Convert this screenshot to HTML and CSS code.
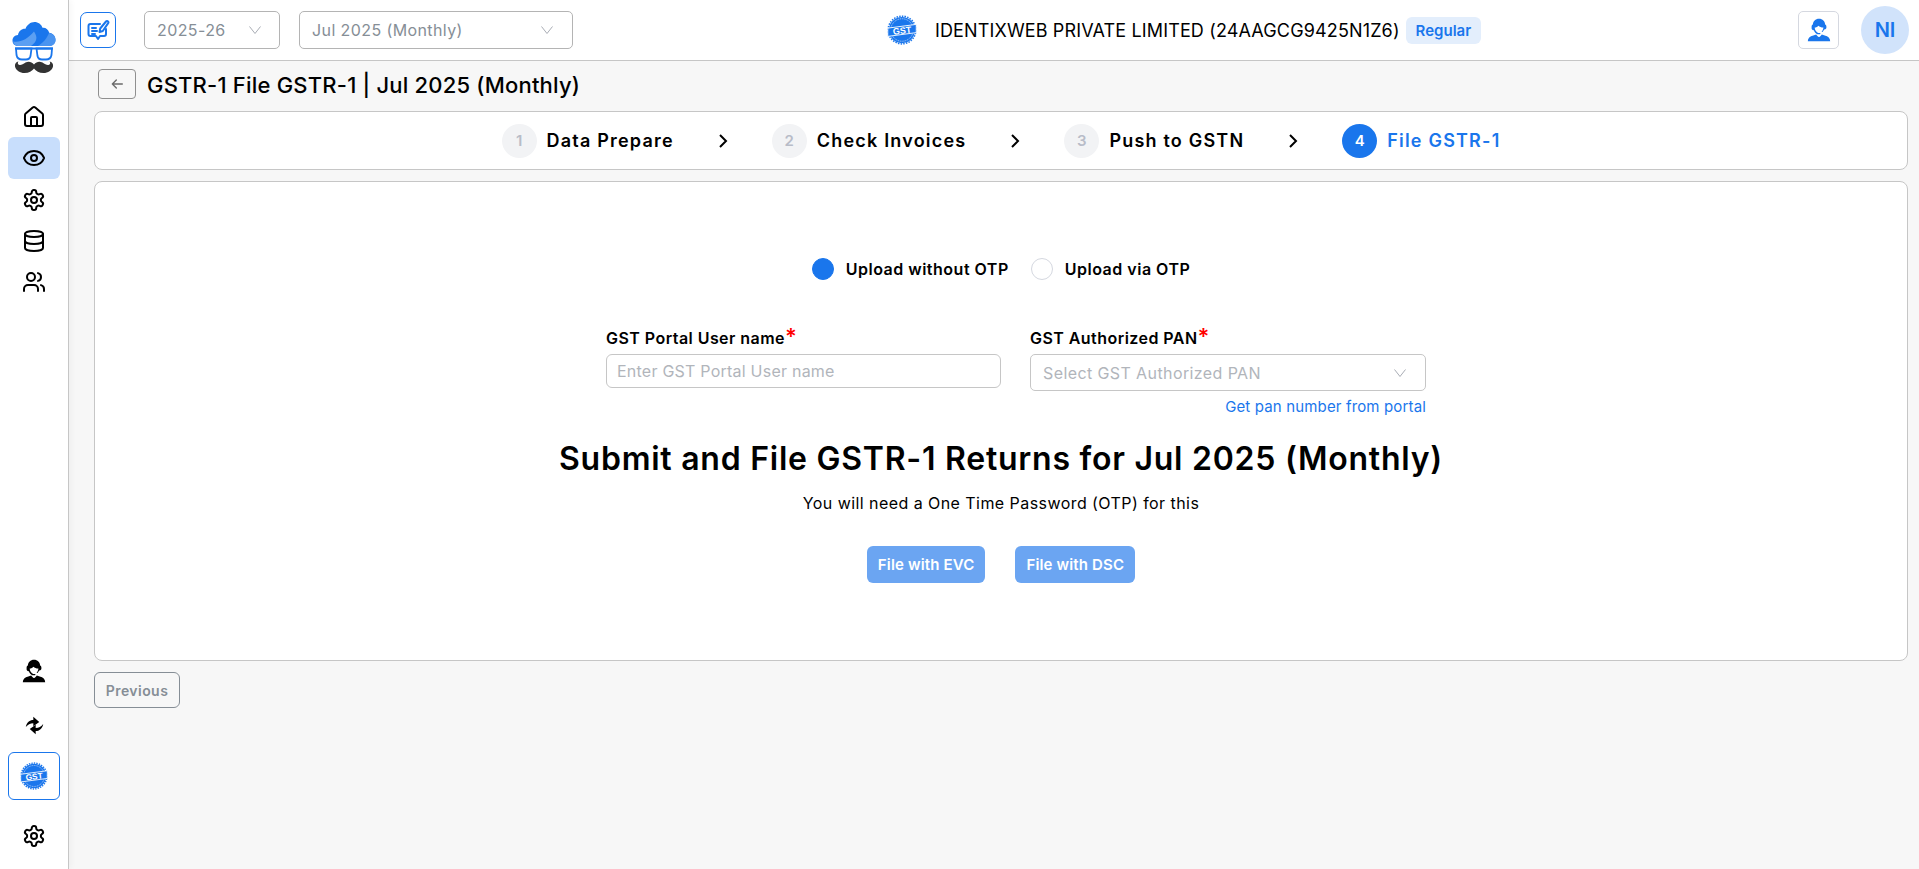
FILE: index.html
```html
<!DOCTYPE html>
<html lang="en">
<head>
    <meta charset="UTF-8">
    <meta name="viewport" content="width=device-width, initial-scale=1.0">
    <title>GSTR-1 File</title>
    <link rel="stylesheet" href="styles.css">
</head>
<body>
    <svg class="defs" width="0" height="0">
        <defs>
            <symbol id="gear" viewBox="0 0 24 24">
                <path d="M12.22 2h-.44a2 2 0 0 0-2 2v.18a2 2 0 0 1-1 1.73l-.43.25a2 2 0 0 1-2 0l-.15-.08a2 2 0 0 0-2.73.73l-.22.38a2 2 0 0 0 .73 2.73l.15.1a2 2 0 0 1 1 1.72v.51a2 2 0 0 1-1 1.74l-.15.09a2 2 0 0 0-.73 2.73l.22.38a2 2 0 0 0 2.73.73l.15-.08a2 2 0 0 1 2 0l.43.25a2 2 0 0 1 1 1.73V20a2 2 0 0 0 2 2h.44a2 2 0 0 0 2-2v-.18a2 2 0 0 1 1-1.73l.43-.25a2 2 0 0 1 2 0l.15.08a2 2 0 0 0 2.73-.73l.22-.39a2 2 0 0 0-.73-2.73l-.15-.08a2 2 0 0 1-1-1.74v-.5a2 2 0 0 1 1-1.74l.15-.09a2 2 0 0 0 .73-2.73l-.22-.38a2 2 0 0 0-2.73-.73l-.15.08a2 2 0 0 1-2 0l-.43-.25a2 2 0 0 1-1-1.73V4a2 2 0 0 0-2-2z"/>
                <circle cx="12" cy="12" r="3"/>
            </symbol>
            <symbol id="agent" viewBox="0 0 24 24">
                <path fill-rule="evenodd" d="M12 .8C8.4.8 6.1 3.3 5.9 6.5 5 6.9 4.6 7.7 4.6 8.7v1.600c0 1 .7 1.900 1.800 1.900h.5c.6 1.700 1.600 3 2.900 3.700.5.300 1 .4 1.600.4h1.400c.4 0 .7-.3.7-.7s-.3-.7-.7-.7h-1.700c-1.900-.6-3.400-3-3.400-5.300 1.500-.1 2.800-.6 3.700-1.800 1.100 1.100 3 1.800 5 1.800-.1 1.600-.8 3.200-1.800 4.300h.9c.7-.7 1.200-1.600 1.600-2.500h.5c1.100 0 1.800-.9 1.800-1.900V8.700c0-1-.4-1.800-1.300-2.200C18 3.300 15.600.8 12 .8z"/>
                <path d="M.8 23.200c0-3.300 2-4.900 5.500-5.800l2.900-1c.7 1.200 1.700 2.200 2.800 2.600 1.100-.4 2.100-1.400 2.800-2.600l2.900 1c3.500.9 5.500 2.500 5.500 5.800z"/>
            </symbol>
            <symbol id="gst" viewBox="0 0 40 40">
                <circle cx="20" cy="20" r="17.500" fill="#1a76ec"/>
                <circle cx="20" cy="20" r="18.500" fill="none" stroke="#1a76ec" stroke-width="2" stroke-dasharray="2 1.600"/>
                <circle cx="20" cy="20" r="15" fill="none" stroke="#cfe1fb" stroke-width="1" stroke-dasharray="1.500 1"/>
                <path d="M1 17.500 39 12.500V23.500L1 28.500z" fill="#1a76ec" stroke="#fff" stroke-width="1.200"/>
                <text x="20" y="25" class="gst-text" transform="rotate(-7 20 20)">GST</text>
            </symbol>
            <symbol id="chevron-down" viewBox="0 0 14 14">
                <path d="M1.500 3.500 7 10.500 12.500 3.500"/>
            </symbol>
            <symbol id="chevron-right" viewBox="0 0 16 16">
                <path d="M5 2 11 8 5 14"/>
            </symbol>
        </defs>
    </svg>

    <div class="app">
        <aside class="sidebar">
            <svg class="logo" viewBox="0 0 44 54">
                <path d="M6 25C2.500 25 .5 22.500 .5 19.500c0-3 2.200-5.400 5.500-5.500C6.700 10 9.800 7.500 13.500 7.800 15 3.800 18.500 1 22.500 1c3.700 0 6.800 2.200 8 5.800 3-.5 6 1.600 6.700 5 3.600.3 6.300 3.400 6.300 7C43.500 22.500 40.500 25 37 25z" fill="#1a76ec"/>
                <path d="M1 20.500c8 1 14-2 21-10 4 6 3 10-3 14.500H6C3.500 25 1.700 23 1 20.500z" fill="#5b9ff2"/>
                <path d="M26 25C32 21 35 17 37 12c4 .5 6.500 3 6.500 7s-3 6-6.500 6z" fill="#4a94f0"/>
                <g fill="none" stroke="#1a76ec" stroke-width="1.800">
                    <path d="M3 27.500H41"/>
                    <path d="M4 27.500H19.500L18.500 35c-.4 2-2 3.500-4.500 3.500H10C7 38.500 5 36.500 4.500 34z"/>
                    <path d="M40 27.500H24.500L25.500 35c.4 2 2 3.500 4.500 3.500H34C37 38.500 39 36.500 39.500 34z"/>
                </g>
                <path d="M22 43.500c2.500-3 5.500-3.500 8.500-2 2.500 1.500 4.500 3 6.500 2.300 1.500-.6 1.500-2.300.5-3.300 2.500.3 4 2.500 3.500 5-1 4-5 6.500-9.500 6.500-4.500 0-7.500-2-9.500-4.500-2 2.500-5 4.500-9.500 4.500-4.500 0-8.500-2.500-9.500-6.500-.5-2.500 1-4.700 3.500-5-1 1-1 2.700.5 3.300 2 .7 4-.8 6.500-2.300 3-1.500 6-1 8.500 2z" fill="#333"/>
            </svg>
            <nav class="side-nav">
                <a class="side-item" href="#">
                    <svg class="icon" viewBox="0 0 24 24"><path d="M15 21v-8a1 1 0 0 0-1-1h-4a1 1 0 0 0-1 1v8"/><path d="M3 10a2 2 0 0 1 .709-1.528l7-5.999a2 2 0 0 1 2.582 0l7 5.999A2 2 0 0 1 21 10v9a2 2 0 0 1-2 2H5a2 2 0 0 1-2-2z"/></svg>
                </a>
                <a class="side-item active" href="#">
                    <svg class="icon" viewBox="0 0 24 24"><path d="M2.062 12.348a1 1 0 0 1 0-.696 10.750 10.750 0 0 1 19.876 0 1 1 0 0 1 0 .696 10.750 10.750 0 0 1-19.876 0"/><circle cx="12" cy="12" r="3"/></svg>
                </a>
                <a class="side-item" href="#">
                    <svg class="icon"><use href="#gear"/></svg>
                </a>
                <a class="side-item" href="#">
                    <svg class="icon" viewBox="0 0 24 24"><ellipse cx="12" cy="5" rx="9" ry="3"/><path d="M3 5V19A9 3 0 0 0 21 19V5"/><path d="M3 12A9 3 0 0 0 21 12"/></svg>
                </a>
                <a class="side-item" href="#">
                    <svg class="icon" viewBox="0 0 24 24"><path d="M16 21v-2a4 4 0 0 0-4-4H6a4 4 0 0 0-4 4v2"/><circle cx="9" cy="7" r="4"/><path d="M22 21v-2a4 4 0 0 0-3-3.870"/><path d="M16 3.130a4 4 0 0 1 0 7.750"/></svg>
                </a>
            </nav>
            <div class="side-bottom">
                <a class="side-link" href="#"><svg class="agent-icon"><use href="#agent"/></svg></a>
                <a class="side-link" href="#">
                    <svg class="swap-icon" viewBox="0 0 24 24">
                        <path d="M1 14C2 8 6 5 10.500 5V1L18 7.500 10.500 13V9C6.500 9 3.500 10.500 1 14z"/>
                        <path d="M23 10C22 16 18 19 13.500 19V23L6 16.500 13.500 11V15C17.500 15 20.500 13.500 23 10z"/>
                    </svg>
                </a>
                <a class="side-gst" href="#"><svg class="gst-small"><use href="#gst"/></svg></a>
                <a class="side-link side-last" href="#"><svg class="icon"><use href="#gear"/></svg></a>
            </div>
        </aside>

        <div class="content">
            <header class="topbar">
                <div class="topbar-left">
                    <button class="note-btn">
                        <svg viewBox="0 0 24 24">
                            <path d="M14 6H4.500A2 2 0 0 0 2.500 8v8a2 2 0 0 0 2 2h5.500l2 3 2-3h4a2 2 0 0 0 2-2v-5"/>
                            <path d="M6 10h4M6 13h5M6 16h3"/>
                            <path d="M13.500 14l.7-3.500L20 3.500c.6-.7 1.500-.7 2 0 .5.500.5 1.300 0 1.900L16.800 13z"/>
                        </svg>
                    </button>
                    <div class="select select-year">
                        <span>2025-26</span>
                        <svg class="caret"><use href="#chevron-down"/></svg>
                    </div>
                    <div class="select select-month">
                        <span>Jul 2025 (Monthly)</span>
                        <svg class="caret"><use href="#chevron-down"/></svg>
                    </div>
                </div>
                <div class="company">
                    <svg class="gst-top"><use href="#gst"/></svg>
                    <span class="company-name">IDENTIXWEB PRIVATE LIMITED (24AAGCG9425N1Z6)</span>
                    <span class="badge">Regular</span>
                </div>
                <div class="topbar-right">
                    <button class="support-btn"><svg class="agent-blue"><use href="#agent"/></svg></button>
                    <div class="avatar">NI</div>
                </div>
            </header>

            <main class="page">
                <div class="title-row">
                    <button class="back-btn">
                        <svg viewBox="0 0 24 24"><path d="M20 12H5M11 6l-6 6 6 6"/></svg>
                    </button>
                    <h1>GSTR-1 File GSTR-1 | Jul 2025 (Monthly)</h1>
                </div>

                <div class="stepper">
                    <div class="step"><span class="step-num">1</span><span class="step-label">Data Prepare</span></div>
                    <svg class="step-arrow"><use href="#chevron-right"/></svg>
                    <div class="step"><span class="step-num">2</span><span class="step-label">Check Invoices</span></div>
                    <svg class="step-arrow"><use href="#chevron-right"/></svg>
                    <div class="step"><span class="step-num">3</span><span class="step-label">Push to GSTN</span></div>
                    <svg class="step-arrow"><use href="#chevron-right"/></svg>
                    <div class="step current"><span class="step-num">4</span><span class="step-label">File GSTR-1</span></div>
                </div>

                <section class="card">
                    <div class="radios">
                        <label class="radio-item"><span class="radio checked"></span>Upload without OTP</label>
                        <label class="radio-item"><span class="radio"></span>Upload via OTP</label>
                    </div>

                    <div class="fields">
                        <div class="field field-user">
                            <label for="username">GST Portal User name<span class="req">*</span></label>
                            <input type="text" id="username" placeholder="Enter GST Portal User name">
                        </div>
                        <div class="field">
                            <label>GST Authorized PAN<span class="req">*</span></label>
                            <div class="select select-pan">
                                <span>Select GST Authorized PAN</span>
                                <svg class="caret"><use href="#chevron-down"/></svg>
                            </div>
                            <a class="pan-link" href="#">Get pan number from portal</a>
                        </div>
                    </div>

                    <h2>Submit and File GSTR-1 Returns for Jul 2025 (Monthly)</h2>
                    <p class="sub">You will need a One Time Password (OTP) for this</p>

                    <div class="file-actions">
                        <button class="file-btn">File with EVC</button>
                        <button class="file-btn">File with DSC</button>
                    </div>
                </section>

                <button class="prev-btn">Previous</button>
            </main>
        </div>
    </div>
</body>
</html>
```

FILE: styles.css
```css
* {
    box-sizing: border-box;
}
html {
    overflow: hidden;
}
body {
    font-family: Inter, "Noto Sans", sans-serif;
    margin: 0;
    padding: 0;
    background-color: #f7f7f7;
    color: #000;
}
button {
    font-family: inherit;
    cursor: pointer;
}
.defs {
    position: absolute;
}
.gst-text {
    font-family: "Liberation Sans", sans-serif;
    font-size: 12px;
    font-weight: 700;
    fill: #fff;
    text-anchor: middle;
}
.app {
    display: flex;
    height: 869px;
}

/* sidebar */
.sidebar {
    width: 69px;
    flex-shrink: 0;
    background: #fff;
    border-right: 1px solid #c6c6c6;
    box-shadow: 2px 0 6px rgba(0,0,0,0.04);
    display: flex;
    flex-direction: column;
    align-items: center;
    z-index: 1;
}
.logo {
    width: 44px;
    height: 54px;
    margin-top: 21px;
    margin-bottom: 21px;
}
.icon {
    width: 24px;
    height: 24px;
    fill: none;
    stroke: #000;
    stroke-width: 2;
    stroke-linecap: round;
    stroke-linejoin: round;
}
.side-nav {
    width: 100%;
    padding: 0 8px;
}
.side-item {
    height: 41px;
    display: flex;
    align-items: center;
    justify-content: center;
    border-radius: 6px;
}
.side-item.active {
    background: #c8defc;
    height: 42px;
}
.side-bottom {
    margin-top: auto;
    width: 100%;
    padding: 0 8px 6px;
    display: flex;
    flex-direction: column;
    align-items: center;
}
.side-link {
    height: 54px;
    display: flex;
    align-items: center;
    justify-content: center;
}
.side-last {
    margin-top: 9px;
}
.agent-icon {
    width: 24px;
    height: 24px;
    fill: #000;
}
.swap-icon {
    width: 19px;
    height: 19px;
    fill: #000;
}
.side-gst {
    width: 52px;
    height: 48px;
    border: 1px solid #1a76ec;
    border-radius: 6px;
    display: flex;
    align-items: center;
    justify-content: center;
}
.gst-small {
    width: 28px;
    height: 28px;
}

/* top bar */
.content {
    flex: 1;
    min-width: 0;
}
.topbar {
    height: 61px;
    background: #fff;
    border-bottom: 1px solid #c6c6c6;
    display: flex;
    align-items: center;
    padding: 0 10px 0 11px;
}
.topbar-left {
    display: flex;
    align-items: center;
}
.note-btn {
    width: 36px;
    height: 36px;
    padding: 5px;
    background: #fff;
    border: 1px solid #1a76ec;
    border-radius: 7px;
    margin-right: 28px;
    display: flex;
}
.note-btn svg {
    width: 24px;
    height: 24px;
    fill: none;
    stroke: #1a76ec;
    stroke-width: 2;
    stroke-linecap: round;
    stroke-linejoin: round;
}
.select {
    display: flex;
    align-items: center;
    justify-content: space-between;
    background: #fff;
    border: 1px solid #b4b4b4;
    border-radius: 5px;
    color: #868e96;
    font-size: 16px;
    letter-spacing: 0.4px;
    height: 38px;
}
.select-year {
    width: 136px;
    padding: 0 17px 0 12px;
    margin-right: 19px;
}
.select-month {
    width: 274px;
    padding: 0 18px 0 12px;
}
.caret {
    width: 14px;
    height: 14px;
    fill: none;
    stroke: #a9adb5;
    stroke-width: 1;
}
.company {
    display: flex;
    align-items: center;
    margin-left: 314px;
}
.gst-top {
    width: 30px;
    height: 30px;
    margin-right: 18px;
}
.company-name {
    font-size: 18px;
    letter-spacing: 0.14px;
    white-space: nowrap;
}
.badge {
    margin-left: 6px;
    background: #e3eefc;
    color: #1a76ec;
    font-size: 15px;
    font-weight: 600;
    padding: 0 10px;
    height: 27px;
    line-height: 27px;
    border-radius: 6px;
    margin-top: 1px;
}
.topbar-right {
    margin-left: auto;
    display: flex;
    align-items: center;
    gap: 22px;
}
.support-btn {
    width: 41px;
    height: 38px;
    padding: 0;
    background: #fff;
    border: 1px solid #d5d8e0;
    border-radius: 5px;
    display: flex;
    align-items: center;
    justify-content: center;
}
.agent-blue {
    width: 24px;
    height: 24px;
    fill: #1a76ec;
}
.avatar {
    width: 48px;
    height: 48px;
    border-radius: 50%;
    background: #d1e3fb;
    color: #1a76ec;
    font-size: 20px;
    font-weight: 600;
    display: flex;
    align-items: center;
    justify-content: center;
}

/* page */
.page {
    padding: 8px 11px 0 25px;
}
.title-row {
    display: flex;
    align-items: center;
    gap: 11px;
    height: 30px;
    margin-bottom: 12px;
    padding-left: 4px;
}
.title-row h1 {
    font-size: 22px;
    font-weight: 500;
    letter-spacing: 0.2px;
    margin: 2px 0 0;
    white-space: nowrap;
}
.back-btn {
    width: 38px;
    height: 30px;
    padding: 0;
    background: #f7f7f7;
    border: 1px solid #8f8f8f;
    border-radius: 4px;
    display: flex;
    align-items: center;
    justify-content: center;
}
.back-btn svg {
    width: 16px;
    height: 16px;
    fill: none;
    stroke: #6b6b6b;
    stroke-width: 2;
    stroke-linecap: round;
    stroke-linejoin: round;
}
.stepper {
    height: 59px;
    background: #fff;
    border: 1px solid #c6c6c6;
    border-radius: 8px;
    display: flex;
    align-items: center;
    justify-content: center;
    gap: 41px;
    margin-bottom: 11px;
}
.step {
    display: flex;
    align-items: center;
    gap: 10px;
}
.step-num {
    width: 35px;
    height: 34px;
    border-radius: 50%;
    background: #f2f3f5;
    color: #b8bcc8;
    font-size: 15px;
    font-weight: 600;
    display: flex;
    align-items: center;
    justify-content: center;
}
.step-label {
    font-size: 18px;
    font-weight: 600;
    letter-spacing: 1.2px;
}
.step-arrow {
    width: 16px;
    height: 16px;
    fill: none;
    stroke: #000;
    stroke-width: 2;
}
.step.current .step-num {
    background: #1a76ec;
    color: #fff;
}
.step.current .step-label {
    color: #1a76ec;
}
.card {
    height: 480px;
    background: #fff;
    border: 1px solid #c6c6c6;
    border-radius: 8px;
    padding-top: 75px;
    display: flex;
    flex-direction: column;
    align-items: center;
}
.radios {
    display: flex;
    gap: 22px;
}
.radio-item {
    display: flex;
    align-items: center;
    gap: 12px;
    font-size: 16px;
    font-weight: 600;
    letter-spacing: 0.5px;
    height: 24px;
}
.radio {
    width: 22px;
    height: 22px;
    border-radius: 50%;
    border: 1px solid #d5d8e0;
    background: #fff;
}
.radio.checked {
    background: #1a76ec;
    border-color: #1a76ec;
}
.fields {
    display: flex;
    gap: 29px;
    margin: 46px 0 0 30px;
    height: 89px;
}
.field {
    width: 396px;
    display: flex;
    flex-direction: column;
}
.field-user {
    width: 395px;
}
.field label {
    font-size: 16px;
    font-weight: 600;
    letter-spacing: 0.45px;
    line-height: 22px;
    margin-bottom: 5px;
}
.req {
    color: #f00;
    font-size: 22px;
    line-height: 16px;
}
.field input {
    height: 34px;
    padding: 0 10px;
    border: 1px solid #c6c6c6;
    border-radius: 6px;
    font-family: inherit;
    font-size: 16px;
    letter-spacing: 0.23px;
    outline: none;
}
.field input::placeholder {
    color: #b1b5bb;
}
.select-pan {
    border-color: #c6c6c6;
    color: #b1b5bb;
    padding: 0 18px 0 12px;
}
.pan-link {
    align-self: flex-end;
    margin-top: 6px;
    font-size: 15px;
    letter-spacing: 0.15px;
    color: #1a76ec;
    text-decoration: none;
}
.card h2 {
    font-size: 32px;
    font-weight: 600;
    letter-spacing: 0.75px;
    margin: 23px 0 0;
    line-height: 40px;
}
.sub {
    font-size: 16px;
    letter-spacing: 0.44px;
    margin: 14px 0 0;
    line-height: 20px;
}
.file-actions {
    display: flex;
    gap: 30px;
    margin-top: 33px;
    margin-left: 0;
}
.file-btn {
    height: 37px;
    padding: 0 11px;
    background: #6ba5f2;
    border: none;
    border-radius: 6px;
    color: #fff;
    font-size: 15px;
    letter-spacing: 0.15px;
    font-weight: 600;
}
.prev-btn {
    display: block;
    margin-top: 11px;
    width: 86px;
    height: 36px;
    padding: 0;
    background: #f7f7f7;
    border: 1px solid #868e96;
    border-radius: 6px;
    color: #868e96;
    font-size: 14px;
    letter-spacing: 0.45px;
    font-weight: 600;
}
```
